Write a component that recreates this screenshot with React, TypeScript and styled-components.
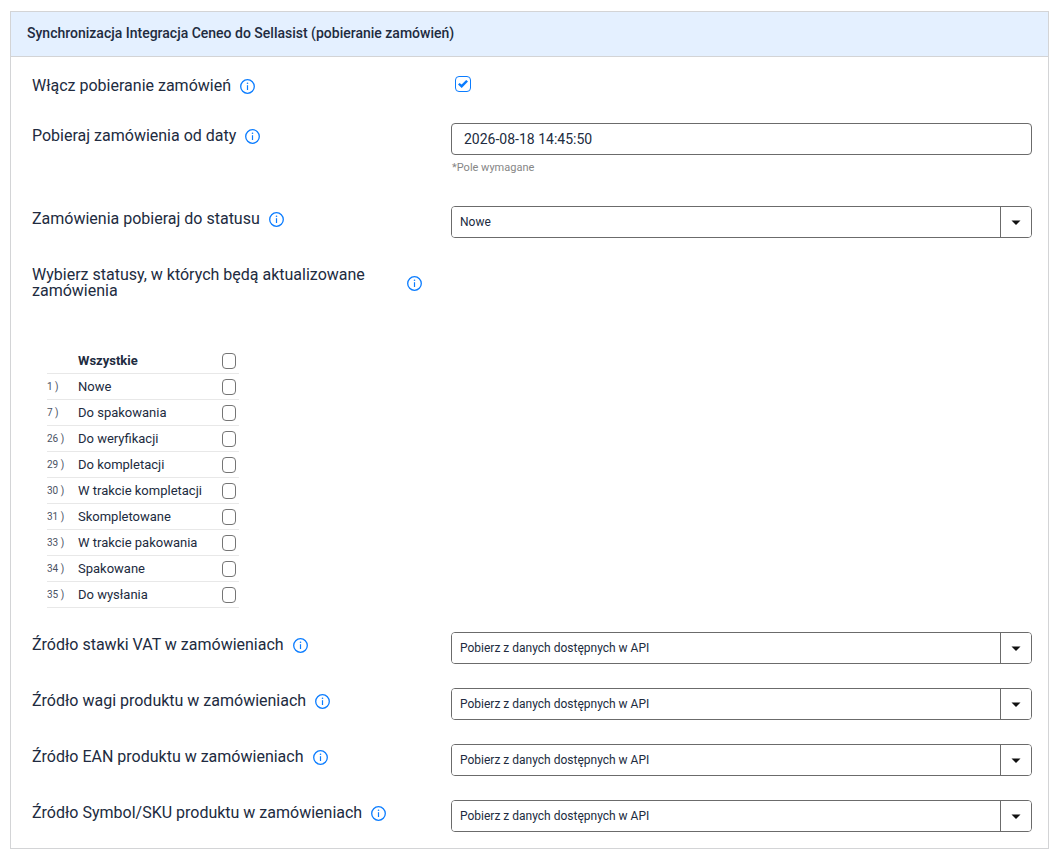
import React from "react";
import styled, { createGlobalStyle } from "styled-components";

const GlobalStyle = createGlobalStyle`
  *, *::before, *::after { box-sizing: border-box; }
  body {
    margin: 0;
    background: #fff;
    color: #212b40;
    font-family: Roboto, "Liberation Sans", sans-serif;
    font-size: 16px;
    line-height: 16px;
  }
`;

const Page = styled.main`
  padding: 11px 11px 10px 10px;
`;

const Panel = styled.section`
  border: 1px solid #d3d4d6;
`;

const PanelHeader = styled.header`
  padding: 11px 16px 13px;
  border-bottom: 1px solid #d3d4d6;
  background: #e4f0ff;
`;

const PanelTitle = styled.h1`
  margin: 0;
  font-size: 14px;
  line-height: 20px;
  font-weight: 500;
`;

const Form = styled.form`
  display: flex;
  flex-direction: column;
  gap: 24px;
  padding: 16px 16px 16px 21px;
`;

const Row = styled.div`
  display: grid;
  grid-template-columns: minmax(0, 419fr) minmax(0, 581fr);
  align-items: start;
`;

const LabelCell = styled.div`
  display: flex;
  align-items: center;
  gap: 8px;
  padding: 5px 28px 0 0;
`;

const InfoButton = styled.button`
  flex: none;
  display: block;
  width: 17px;
  height: 16px;
  padding: 0;
  border: 0;
  background: none;
  color: #0a7cff;
  cursor: pointer;

  svg { display: block; }
`;

const CheckCell = styled.div`
  padding: 3px 4px 7px;
`;

const Checkbox = styled.input<{ $narrow?: boolean }>`
  appearance: none;
  display: grid;
  place-items: center;
  width: ${(p) => (p.$narrow ? 14 : 16)}px;
  height: 16px;
  margin: 0;
  border: 1px solid #757575;
  border-radius: 4px;
  background: #fff;
  cursor: pointer;

  &:checked { border-color: #0a7cff; }
  &:checked::before {
    content: "";
    width: 10px;
    height: 8px;
    background: #0a7cff;
    clip-path: polygon(0 56%, 16% 36%, 36% 56%, 82% 0, 100% 20%, 37% 100%);
  }
`;

const TextInput = styled.input`
  display: block;
  width: 100%;
  height: 32px;
  padding: 0 12px;
  border: 1px solid #6b6b6b;
  border-radius: 4px;
  background: #fff;
  color: inherit;
  font: 14px/20px Roboto, "Liberation Sans", sans-serif;
`;

const Hint = styled.p`
  margin: 0;
  padding: 5px 1px 6px;
  color: #868686;
  font-size: 11px;
`;

const SelectBox = styled.div`
  display: grid;
  grid-template-columns: minmax(0, 1fr) 31px;
  height: 32px;
  border: 1px solid #6b6b6b;
  border-radius: 4px;
  overflow: hidden;
`;

const SelectInput = styled.select`
  grid-area: 1 / 1 / 2 / 3;
  appearance: none;
  width: 100%;
  padding: 0 40px 0 8px;
  border: 0;
  background: #fff;
  color: inherit;
  font: 12px/16px Roboto, "Liberation Sans", sans-serif;
  cursor: pointer;
`;

const SelectArrow = styled.span`
  grid-area: 1 / 2;
  display: grid;
  place-items: center;
  border-left: 1px solid #6b6b6b;
  pointer-events: none;
`;

const StatusList = styled.ul`
  width: 192px;
  margin: 0 0 0 15px;
  padding: 25px 0 0;
  list-style: none;
`;

const StatusItem = styled.li`
  display: grid;
  grid-template-columns: 31px 1fr auto;
  align-items: center;
  height: 26px;
  padding-right: 3px;
  border-bottom: 1px solid #e8e8e8;
`;

const StatusNumber = styled.span`
  font-size: 10px;
  color: #4a5263;
`;

const StatusName = styled.label<{ $bold?: boolean }>`
  font-size: 13px;
  font-weight: ${(p) => (p.$bold ? 700 : 400)};
`;

const Info = () => (
  <InfoButton type="button" aria-label="Informacja">
    <svg width="17" height="16" viewBox="0 0 17 16" fill="none">
      <circle cx="8.5" cy="8.5" r="6.8" stroke="currentColor" strokeWidth="1.3" />
      <path d="M8.5 7.2V12" stroke="currentColor" strokeWidth="1.2" />
      <circle cx="8.5" cy="5.3" r="0.8" fill="currentColor" />
    </svg>
  </InfoButton>
);

const FieldLabel = ({ id, text }: { id: string; text: string }) => (
  <LabelCell>
    <label htmlFor={id}>{text}</label>
    <Info />
  </LabelCell>
);

const SelectField = ({ id, label, value }: { id: string; label: string; value: string }) => (
  <Row>
    <FieldLabel id={id} text={label} />
    <SelectBox>
      <SelectInput id={id} defaultValue={value}>
        <option>{value}</option>
      </SelectInput>
      <SelectArrow>
        <svg width="10" height="5" viewBox="0 0 10 5">
          <path d="M0.5 0.5H9.5L5 5Z" fill="#111" />
        </svg>
      </SelectArrow>
    </SelectBox>
  </Row>
);

const statuses: [number, string][] = [
  [1, "Nowe"],
  [7, "Do spakowania"],
  [26, "Do weryfikacji"],
  [29, "Do kompletacji"],
  [30, "W trakcie kompletacji"],
  [31, "Skompletowane"],
  [33, "W trakcie pakowania"],
  [34, "Spakowane"],
  [35, "Do wysłania"],
];

const sources = [
  { id: "vat", label: "Źródło stawki VAT w zamówieniach" },
  { id: "weight", label: "Źródło wagi produktu w zamówieniach" },
  { id: "ean", label: "Źródło EAN produktu w zamówieniach" },
  { id: "sku", label: "Źródło Symbol/SKU produktu w zamówieniach" },
];

export default function App() {
  return (
    <>
      <GlobalStyle />
      <Page>
        <Panel>
          <PanelHeader>
            <PanelTitle>Synchronizacja Integracja Ceneo do Sellasist (pobieranie zamówień)</PanelTitle>
          </PanelHeader>
          <Form>
            <Row>
              <FieldLabel id="enabled" text="Włącz pobieranie zamówień" />
              <CheckCell>
                <Checkbox id="enabled" type="checkbox" defaultChecked />
              </CheckCell>
            </Row>
            <Row>
              <FieldLabel id="from" text="Pobieraj zamówienia od daty" />
              <div>
                <TextInput id="from" type="text" defaultValue="2026-08-18 14:45:50" />
                <Hint>*Pole wymagane</Hint>
              </div>
            </Row>
            <SelectField id="status" label="Zamówienia pobieraj do statusu" value="Nowe" />
            <Row>
              <FieldLabel id="all" text="Wybierz statusy, w których będą aktualizowane zamówienia" />
            </Row>
            <StatusList>
              <StatusItem>
                <span />
                <StatusName htmlFor="all" $bold>Wszystkie</StatusName>
                <Checkbox id="all" type="checkbox" $narrow />
              </StatusItem>
              {statuses.map(([n, name]) => (
                <StatusItem key={n}>
                  <StatusNumber>{n} )</StatusNumber>
                  <StatusName htmlFor={`status-${n}`}>{name}</StatusName>
                  <Checkbox id={`status-${n}`} type="checkbox" $narrow />
                </StatusItem>
              ))}
            </StatusList>
            {sources.map((s) => (
              <SelectField key={s.id} id={s.id} label={s.label} value="Pobierz z danych dostępnych w API" />
            ))}
          </Form>
        </Panel>
      </Page>
    </>
  );
}
